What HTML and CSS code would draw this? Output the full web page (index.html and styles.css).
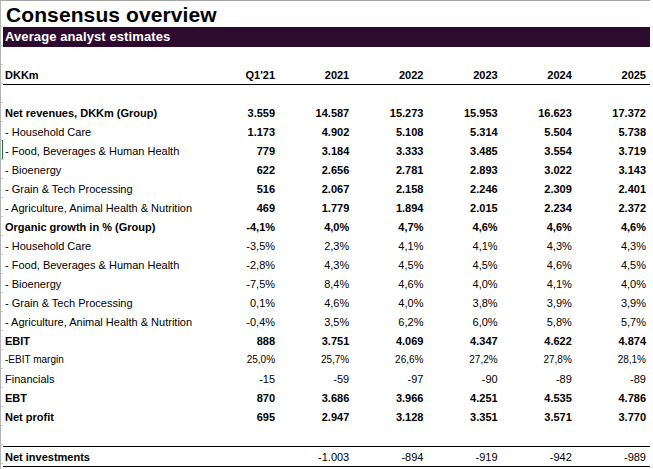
FILE: index.html
```html
<!DOCTYPE html>
<html lang="en">
<head>
<meta charset="utf-8">
<title>Consensus overview</title>
<link rel="stylesheet" href="styles.css">
</head>
<body>
<div class="sheet">
  <div class="gutter"></div>
  <div class="content">
    <h1 class="title">Consensus overview</h1>
    <div class="band">Average analyst estimates</div>
    <div class="spacer"></div>
    <div class="row head">
      <div class="lbl">DKKm</div><div>Q1'21</div><div>2021</div><div>2022</div><div>2023</div><div>2024</div><div>2025</div>
    </div>
    <div class="spacer2"></div>
    <div class="row bold">
      <div class="lbl">Net revenues, DKKm (Group)</div><div>3.559</div><div>14.587</div><div>15.273</div><div>15.953</div><div>16.623</div><div>17.372</div>
    </div>
    <div class="row numbold">
      <div class="lbl">- Household Care</div><div>1.173</div><div>4.902</div><div>5.108</div><div>5.314</div><div>5.504</div><div>5.738</div>
    </div>
    <div class="row numbold sel">
      <div class="lbl">- Food, Beverages &amp; Human Health</div><div>779</div><div>3.184</div><div>3.333</div><div>3.485</div><div>3.554</div><div>3.719</div>
    </div>
    <div class="row numbold">
      <div class="lbl">- Bioenergy</div><div>622</div><div>2.656</div><div>2.781</div><div>2.893</div><div>3.022</div><div>3.143</div>
    </div>
    <div class="row numbold">
      <div class="lbl">- Grain &amp; Tech Processing</div><div>516</div><div>2.067</div><div>2.158</div><div>2.246</div><div>2.309</div><div>2.401</div>
    </div>
    <div class="row numbold">
      <div class="lbl">- Agriculture, Animal Health &amp; Nutrition</div><div>469</div><div>1.779</div><div>1.894</div><div>2.015</div><div>2.234</div><div>2.372</div>
    </div>
    <div class="row bold">
      <div class="lbl">Organic growth in % (Group)</div><div>-4,1%</div><div>4,0%</div><div>4,7%</div><div>4,6%</div><div>4,6%</div><div>4,6%</div>
    </div>
    <div class="row">
      <div class="lbl">- Household Care</div><div>-3,5%</div><div>2,3%</div><div>4,1%</div><div>4,1%</div><div>4,3%</div><div>4,3%</div>
    </div>
    <div class="row">
      <div class="lbl">- Food, Beverages &amp; Human Health</div><div>-2,8%</div><div>4,3%</div><div>4,5%</div><div>4,5%</div><div>4,6%</div><div>4,5%</div>
    </div>
    <div class="row">
      <div class="lbl">- Bioenergy</div><div>-7,5%</div><div>8,4%</div><div>4,6%</div><div>4,0%</div><div>4,1%</div><div>4,0%</div>
    </div>
    <div class="row">
      <div class="lbl">- Grain &amp; Tech Processing</div><div>0,1%</div><div>4,6%</div><div>4,0%</div><div>3,8%</div><div>3,9%</div><div>3,9%</div>
    </div>
    <div class="row">
      <div class="lbl">- Agriculture, Animal Health &amp; Nutrition</div><div>-0,4%</div><div>3,5%</div><div>6,2%</div><div>6,0%</div><div>5,8%</div><div>5,7%</div>
    </div>
    <div class="row bold">
      <div class="lbl">EBIT</div><div>888</div><div>3.751</div><div>4.069</div><div>4.347</div><div>4.622</div><div>4.874</div>
    </div>
    <div class="row small">
      <div class="lbl">-EBIT margin</div><div>25,0%</div><div>25,7%</div><div>26,6%</div><div>27,2%</div><div>27,8%</div><div>28,1%</div>
    </div>
    <div class="row">
      <div class="lbl">Financials</div><div>-15</div><div>-59</div><div>-97</div><div>-90</div><div>-89</div><div>-89</div>
    </div>
    <div class="row bold">
      <div class="lbl">EBT</div><div>870</div><div>3.686</div><div>3.966</div><div>4.251</div><div>4.535</div><div>4.786</div>
    </div>
    <div class="row bold">
      <div class="lbl">Net profit</div><div>695</div><div>2.947</div><div>3.128</div><div>3.351</div><div>3.571</div><div>3.770</div>
    </div>
    <div class="spacer3"></div>
    <div class="row boxed">
      <div class="lbl lblbold">Net investments</div><div></div><div>-1.003</div><div>-894</div><div>-919</div><div>-942</div><div>-989</div>
    </div>
  </div>
</div>
</body>
</html>
```

FILE: styles.css
```css
html, body {
  margin: 0;
  padding: 0;
  background: #ffffff;
}

body {
  font-family: "Liberation Sans", Arial, sans-serif;
  color: #000000;
}

.sheet {
  display: flex;
  width: 650px;
  height: 469px;
  border-top: 1px solid #a3a3a3;
  box-sizing: border-box;
}

.gutter {
  width: 2px;
  flex: 0 0 2px;
  border-left: 1px solid #b4b4b4;
  background: repeating-linear-gradient(to bottom, transparent 0 18px, #c8c8c8 18px 19px);
  background-position: 0 7px;
}

.content {
  flex: 1;
  display: flex;
  flex-direction: column;
}

.title {
  margin: 0;
  height: 26px;
  line-height: 28px;
  font-size: 21px;
  font-weight: bold;
  padding-left: 3px;
  letter-spacing: 0.1px;
}

.band {
  height: 20px;
  line-height: 20px;
  background: #2d0b2e;
  color: #ffffff;
  font-size: 13px;
  font-weight: bold;
  padding-left: 2px;
  letter-spacing: 0.1px;
}

.spacer { height: 18px; }
.spacer2 { height: 17px; }
.spacer3 { height: 21px; }

.row {
  display: grid;
  grid-template-columns: 1fr repeat(6, 74.2px);
  height: 19px;
  line-height: 22px;
  font-size: 11px;
  box-sizing: border-box;
}

.row > div {
  text-align: right;
  padding-right: 4px;
  white-space: nowrap;
}

.row > .lbl {
  text-align: left;
  padding-left: 2px;
  padding-right: 0;
}

.head {
  font-weight: bold;
  height: 20px;
  line-height: 21px;
  border-bottom: 1px solid #000000;
}

.bold { font-weight: bold; }

.numbold > div { font-weight: bold; }
.numbold > .lbl { font-weight: normal; }

.small { font-size: 10px; }

.sel { box-shadow: -1px 0 0 #217346; }

.boxed {
  height: 21px;
  line-height: 21px;
  border-top: 1px solid #000000;
  border-bottom: 1px solid #000000;
}

.lblbold { font-weight: bold; }
```
